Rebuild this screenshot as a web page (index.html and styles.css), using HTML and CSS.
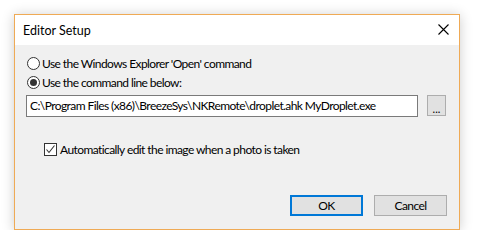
FILE: index.html
```html
<!DOCTYPE html>
<html lang="en">
<head>
    <meta charset="UTF-8">
    <title>Editor Setup</title>
    <link rel="stylesheet" href="styles.css">
</head>
<body>

<div class="window">
    <div class="title-bar">
        <span class="title">Editor Setup</span>
        <svg class="close" width="11" height="11" viewBox="0 0 11 11">
            <path d="M0.5 0.5 L10.5 10.5 M10.5 0.5 L0.5 10.5" stroke="#000" stroke-width="1.1" fill="none"/>
        </svg>
    </div>

    <div class="content">
        <label class="option">
            <span class="radio"></span>
            <span>Use the Windows Explorer 'Open' command</span>
        </label>
        <label class="option">
            <span class="radio checked"></span>
            <span>Use the command line below:</span>
        </label>

        <div class="command-row">
            <div class="textbox">C:\Program Files (x86)\BreezeSys\NKRemote\droplet.ahk MyDroplet.exe</div>
            <div class="browse">...</div>
        </div>

        <label class="option check-option">
            <span class="checkbox">
                <svg width="11" height="11" viewBox="0 0 11 11">
                    <path d="M1.5 5.5 L4 8.5 L9.5 1.5" stroke="#333" stroke-width="1.1" fill="none"/>
                </svg>
            </span>
            <span>Automatically edit the image when a photo is taken</span>
        </label>

        <div class="buttons">
            <div class="button default">OK</div>
            <div class="button">Cancel</div>
        </div>
    </div>
</div>

</body>
</html>
```

FILE: styles.css
```css
* {
    box-sizing: border-box;
    margin: 0;
    padding: 0;
}

body {
    background: #ffffff;
    font-family: 'Lato', 'Noto Sans', sans-serif;
    font-size: 12px;
    letter-spacing: -0.58px;
    color: #000;
    padding: 14px 0 0 14px;
}

.window {
    width: 446px;
    height: 216px;
    border: 1px solid #efaa55;
    background: #f0f0f0;
    box-shadow: 0 1px 12px rgba(0, 0, 0, 0.2);
    display: flex;
    flex-direction: column;
}

.title-bar {
    height: 30px;
    background: #fff;
    display: flex;
    align-items: center;
    justify-content: space-between;
    padding: 0 10px 0 8px;
}

.title {
    font-size: 12.5px;
    letter-spacing: 0;
    color: #000;
}

.close {
    margin-top: -1px;
}

.content {
    flex: 1;
    padding: 9px 12px 0 12px;
    display: flex;
    flex-direction: column;
}

.option {
    display: flex;
    align-items: center;
    height: 19px;
    gap: 2px;
}

.radio {
    width: 13px;
    height: 13px;
    border: 1px solid #333;
    border-radius: 50%;
    background: #fff;
    display: flex;
    align-items: center;
    justify-content: center;
}

.radio.checked::after {
    content: "";
    width: 7px;
    height: 7px;
    border-radius: 50%;
    background: #333;
}

.command-row {
    display: flex;
    align-items: flex-start;
    margin-top: 3px;
}

.textbox {
    width: 392px;
    height: 22px;
    border: 1px solid #7a7a7a;
    background: #fff;
    padding: 0 3px;
    line-height: 20px;
    white-space: nowrap;
    overflow: hidden;
    margin-left: -1px;
}

.browse {
    width: 19px;
    height: 21px;
    margin-left: 9px;
    border: 1px solid #adadad;
    background: #e1e1e1;
    text-align: center;
    padding-top: 3px;
    line-height: 20px;
    font-size: 11px;
    letter-spacing: 0;
    overflow: hidden;
}

.check-option {
    margin-top: 23px;
    padding-left: 17px;
    gap: 3px;
}

.checkbox {
    width: 13px;
    height: 13px;
    border: 1px solid #333;
    background: #fff;
    display: flex;
    align-items: center;
    justify-content: center;
}

.buttons {
    display: flex;
    justify-content: flex-end;
    gap: 11px;
    margin-top: 36px;
}

.button {
    width: 73px;
    height: 21px;
    border: 1px solid #adadad;
    background: #e1e1e1;
    display: flex;
    align-items: center;
    justify-content: center;
}

.button.default {
    border: 2px solid #0078d7;
}
```
